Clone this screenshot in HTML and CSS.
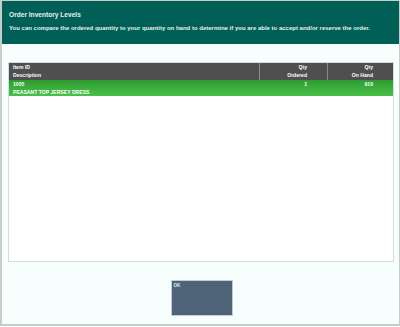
FILE: index.html
```html
<!DOCTYPE html>
<html>

<head>
    <meta name="viewport" content="width=device-width, initial-scale=1">
    <title>Order Inventory Levels</title>
    <link rel="stylesheet" href="styles.css">
</head>

<body>
    <div class="page">
        <div class="header">
            <div class="title">Order Inventory Levels</div>
            <div class="subtitle">You can compare the ordered quantity to your quantity on hand to determine if you are able to accept and/or reserve the order.</div>
        </div>

        <div class="content">
            <div class="grid">
                <div class="row head">
                    <div class="cell item"><span>Item ID</span><span>Description</span></div>
                    <div class="cell qty"><span>Qty</span><span>Ordered</span></div>
                    <div class="cell qty"><span>Qty</span><span>On Hand</span></div>
                </div>
                <div class="row selected">
                    <div class="cell item"><span>1005</span><span>PEASANT TOP JERSEY DRESS</span></div>
                    <div class="cell qty"><span>1</span></div>
                    <div class="cell qty"><span>910</span></div>
                </div>
            </div>

            <div class="actions">
                <button class="btn">OK</button>
            </div>
        </div>
    </div>
</body>

</html>
```

FILE: styles.css
```css
body {
    margin: 0;
    font-family: 'Liberation Sans', Arial, sans-serif;
    background: #ffffff;
}

.page {
    height: 326px;
    box-sizing: border-box;
    border: 2px solid #c9cdc9;
    border-top-width: 1px;
    border-right-width: 1px;
    background: #f6fffe;
    display: flex;
    flex-direction: column;
}

.header {
    background: #005f57;
    color: #e8f0ee;
    height: 43px;
    box-sizing: border-box;
    padding: 10px 7px 0;
    font-weight: bold;
    font-size: 6.6px;
    line-height: 8px;
    white-space: nowrap;
}

.subtitle {
    margin-top: 5px;
    font-size: 6px;
}

.content {
    flex: 1;
    display: flex;
    flex-direction: column;
    padding: 18px 5px 0 6px;
}

.grid {
    height: 200px;
    box-sizing: border-box;
    border: 1px solid #d6dcdc;
    background: #ffffff;
}

.row {
    display: grid;
    grid-template-columns: 250px 68px 1fr;
    color: #ffffff;
    font-weight: bold;
    font-size: 5.1px;
    line-height: 7.5px;
}

.row.head {
    background: #4f4f4f;
    height: 17px;
}

.row.head .cell + .cell {
    border-left: 1px solid #8a8a8a;
}

.row.selected {
    background: linear-gradient(180deg, #2f9a32 0%, #3fb23f 60%, #49c04a 100%);
    height: 16px;
}

.cell {
    display: flex;
    flex-direction: column;
    padding: 1px 4px 0;
}

.cell.qty {
    align-items: flex-end;
    padding-right: 20px;
}

.actions {
    display: flex;
    justify-content: center;
    padding: 18px 0 0 1px;
}

.btn {
    width: 62px;
    height: 36px;
    box-sizing: border-box;
    border: 1px solid #c4ccd2;
    background: #4f6479;
    color: #e4e8ec;
    font-family: inherit;
    font-weight: bold;
    font-size: 4.5px;
    text-align: left;
    padding: 2px 2px;
    display: flex;
    align-items: flex-start;
}
```
